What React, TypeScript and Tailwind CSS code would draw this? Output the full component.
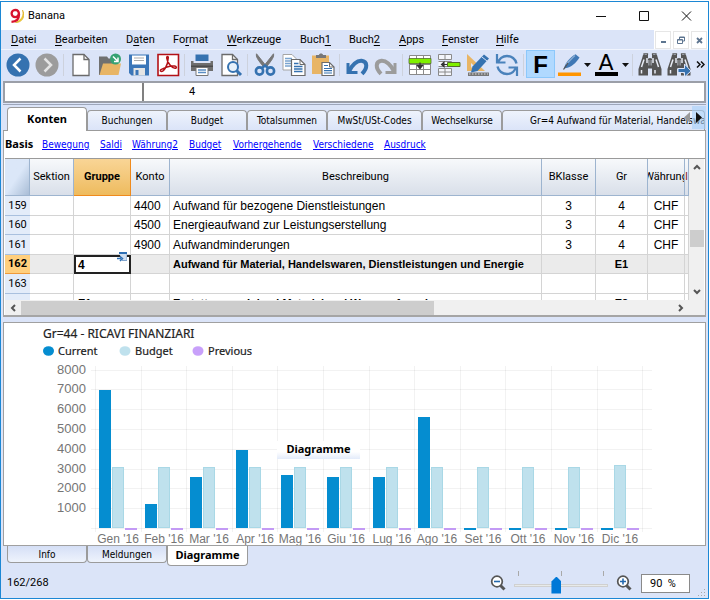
import React, { useState } from 'react';

const ui = "font-['Roboto','Open_Sans',sans-serif]";
const tabFont = "font-['DejaVu_Sans_Condensed','Noto_Sans',sans-serif]";
const strong = "font-['Noto_Sans','Open_Sans',sans-serif] font-bold";

const menus = [
  { pre: '', key: 'D', post: 'atei', width: 'w-[44px]' },
  { pre: '', key: 'B', post: 'earbeiten', width: 'w-[71px]' },
  { pre: 'D', key: 'a', post: 'ten', width: 'w-[47px]' },
  { pre: 'Fo', key: 'r', post: 'mat', width: 'w-[54px]' },
  { pre: '', key: 'W', post: 'erkzeuge', width: 'w-[73px]' },
  { pre: 'Buch', key: '1', post: '', width: 'w-[49px]' },
  { pre: 'Buch', key: '2', post: '', width: 'w-[50px]' },
  { pre: '', key: 'A', post: 'pps', width: 'w-[43px]' },
  { pre: '', key: 'F', post: 'enster', width: 'w-[54px]' },
  { pre: '', key: 'H', post: 'ilfe', width: 'w-[40px]' },
];

const tabs = [
  { label: 'Konten', width: 'w-[80px]' },
  { label: 'Buchungen', width: 'w-[80px]' },
  { label: 'Budget', width: 'w-[80px]' },
  { label: 'Totalsummen', width: 'w-[80px]' },
  { label: 'MwSt/USt-Codes', width: 'w-[95px]' },
  { label: 'Wechselkurse', width: 'w-[80px]' },
  { label: 'Gr=4 Aufwand für Material, Handelswa', width: 'flex-1' },
];

const views = [
  { label: 'Bewegung', width: 'w-[58px]' },
  { label: 'Saldi', width: 'w-[32px]' },
  { label: 'Währung2', width: 'w-[57px]' },
  { label: 'Budget', width: 'w-[44px]' },
  { label: 'Vorhergehende', width: 'w-[80px]' },
  { label: 'Verschiedene', width: 'w-[71px]' },
  { label: 'Ausdruck', width: 'w-[50px]' },
];

const rows = [
  { nr: '159', gruppe: '', konto: '4400', text: 'Aufwand für bezogene Dienstleistungen', bklasse: '3', gr: '4', curr: 'CHF' },
  { nr: '160', gruppe: '', konto: '4500', text: 'Energieaufwand zur Leistungserstellung', bklasse: '3', gr: '4', curr: 'CHF' },
  { nr: '161', gruppe: '', konto: '4900', text: 'Aufwandminderungen', bklasse: '3', gr: '4', curr: 'CHF' },
  { nr: '162', gruppe: '4', konto: '', text: 'Aufwand für Material, Handelswaren, Dienstleistungen und Energie', bklasse: '', gr: 'E1', curr: '', active: true, bold: true },
  { nr: '163', gruppe: '', konto: '', text: '', bklasse: '', gr: '', curr: '' },
  { nr: '', gruppe: 'E1', konto: '', text: 'Erstattungen, Inland Material und Warenaufwand', bklasse: '', gr: 'E2', curr: '', bold: true },
];

const months = [
  { name: "Gen '16", current: 6950, budget: 3080 },
  { name: "Feb '16", current: 1230, budget: 3080 },
  { name: "Mar '16", current: 2600, budget: 3080 },
  { name: "Apr '16", current: 3950, budget: 3080 },
  { name: "Mag '16", current: 2690, budget: 3080 },
  { name: "Giu '16", current: 2600, budget: 3080 },
  { name: "Lug '16", current: 2600, budget: 3080 },
  { name: "Ago '16", current: 5600, budget: 3080 },
  { name: "Set '16", current: 0, budget: 3080 },
  { name: "Ott '16", current: 0, budget: 3080 },
  { name: "Nov '16", current: 0, budget: 3080 },
  { name: "Dic '16", current: 0, budget: 3200 },
];

const Icon: React.FC<{ children: React.ReactNode }> = ({ children }) => (
  <svg viewBox="0 0 24 24" width="24" height="24" fill="none" aria-hidden="true">{children}</svg>
);

const Tool: React.FC<{ label: string; children: React.ReactNode; wide?: string }> = ({ label, children, wide = 'w-[29px]' }) => (
  <button type="button" aria-label={label} className={`${wide} h-[29px] shrink-0 flex items-center justify-center`}>
    {children}
  </button>
);

const Sep = () => (
  <div className="w-[5px] h-[29px] shrink-0 flex items-center justify-center">
    <div className="w-px h-[22px] bg-[#cdd2dd]" />
  </div>
);

const Drop = ({ label }: { label: string }) => (
  <Tool label={label} wide="w-[10px]">
    <svg width="7" height="4" viewBox="0 0 7 4"><path d="M0 0h7L3.500 4z" fill="#111" /></svg>
  </Tool>
);

const Binoculars = () => (
  <>
    <path d="M4 5.500 5 2h5v3.500h4V2h5l1 3.500L23.500 16v6.500H14v-7h-4v7H.5V16z" fill="#555" />
    <path d="M6 6.500 3.500 14M9 5v5M15 5v5M18 6.500l2.500 7.500M3.500 17v3.500M17 17v3.500" stroke="#e8ecf5" strokeWidth="1.500" />
    <path d="M6 2V.8h3.500V2M14.500 2V.8H18V2" stroke="#555" strokeWidth="1.200" />
    <path d="M10.500 7h3v5.500h-3z" fill="#c9cfdb" />
    <path d="M11.300 5h1.400v10h-1.400z" fill="#555" />
  </>
);

const Toolbar = () => (
  <div role="toolbar" className="flex items-start h-8 pl-[2px] bg-[#dbe4f8] border-t border-[#f0f4fd] overflow-hidden">
    <Tool label="Zurück">
      <Icon><circle cx="12" cy="12" r="11.500" fill="#3572b0" /><path d="M14.500 5.500 8 12l6.500 6.500" stroke="#fff" strokeWidth="2.500" /></Icon>
    </Tool>
    <Tool label="Vorwärts">
      <Icon><circle cx="12" cy="12" r="11.500" fill="#9c9c9c" /><path d="M9.500 5.500 16 12l-6.500 6.500" stroke="#e4e4e4" strokeWidth="2.500" /></Icon>
    </Tool>
    <Sep />
    <Tool label="Neu">
      <Icon><path d="M4 1.500h11l5 5v16H4z" fill="#fff" stroke="#6b6b6b" strokeWidth="1.300" /><path d="M15 1.500v5h5" stroke="#6b6b6b" strokeWidth="1.300" /></Icon>
    </Tool>
    <Tool label="Öffnen">
      <Icon>
        <path d="M1 3.500h8l1.500 2H17V22H1z" fill="#707070" />
        <path d="M5 10.500h18L20.500 22H1.500z" fill="#e8b565" />
        <circle cx="17.500" cy="6" r="5.500" fill="#36a273" />
        <path d="m15 3.500 4.500 4.500M20 4.500v4h-4" stroke="#fff" strokeWidth="1.500" />
      </Icon>
    </Tool>
    <Tool label="Speichern">
      <Icon>
        <path d="M2 1.500h20v21H4.500L2 20z" fill="#3b76b8" />
        <path d="M5 2.500h14v9H5z" fill="#fff" />
        <path d="M7 5h10M7 7.500h10" stroke="#aaa" />
        <path d="M6.500 15H18v7.500H6.500z" fill="#e5e5e5" />
        <path d="M8.500 17h3v5h-3z" fill="#3b76b8" />
      </Icon>
    </Tool>
    <Tool label="PDF">
      <Icon>
        <path d="M2 1.500h20.500v21H2z" fill="#fff" stroke="#b31217" strokeWidth="1.600" />
        <path d="M4.500 18c2.500 2.500 7.500-5 7.800-13.500 0-1.500-1.800-1.300-1.600.3.500 4.700 5 10.200 8.300 10.400 2.300 0 1.500-2-.5-2.200-4.500-.5-9.500 1.300-13.500 3.700-.6.400-.8.900-.5 1.300z" stroke="#b31217" strokeWidth="1.500" />
      </Icon>
    </Tool>
    <Sep />
    <Tool label="Drucken">
      <Icon>
        <path d="M5.500 1.500h13V8h-13z" fill="#3572b0" />
        <path d="M1 8h2.500v2h17V8H23v10H1z" fill="#6e6e6e" />
        <path d="M1 12.500h22V14H1z" fill="#4c4c4c" />
        <path d="M6 14.500h12v8H6z" fill="#fff" stroke="#777" />
        <path d="M8 17h8M8 19.500h8" stroke="#5b8ec4" strokeWidth="1.300" />
      </Icon>
    </Tool>
    <Tool label="Seitenansicht">
      <Icon>
        <path d="M3 1.500h10.500l5 5v16H3z" fill="#fff" stroke="#6b6b6b" strokeWidth="1.300" />
        <path d="M13.500 1.500v5h5" stroke="#6b6b6b" strokeWidth="1.300" />
        <circle cx="14" cy="14" r="5" fill="#e8f1fa" stroke="#3572b0" strokeWidth="2" />
        <path d="m17.500 17.500 4.500 4.500" stroke="#3572b0" strokeWidth="3" />
      </Icon>
    </Tool>
    <Sep />
    <Tool label="Ausschneiden">
      <Icon>
        <path d="M3.500.8c-.7 3 1 5.500 7 13l2.500-1zM20.500.8c.7 3-1 5.500-7 13l-2.500-1z" fill="#777" stroke="#777" />
        <circle cx="6.500" cy="18" r="3.600" stroke="#3572b0" strokeWidth="2.600" />
        <circle cx="17.500" cy="18" r="3.600" stroke="#3572b0" strokeWidth="2.600" />
        <path d="m9 15 3-2.500 3 2.500" stroke="#3572b0" strokeWidth="2.400" />
      </Icon>
    </Tool>
    <Tool label="Kopieren">
      <Icon>
        <path d="M1 1.500h9l4 4V17H1z" fill="#fff" stroke="#a5a5a5" />
        <path d="M3 5.500h7M3 8h9M3 10.500h9M3 13h9" stroke="#7aa4d0" strokeWidth="1.300" />
        <path d="M9.500 6.500H18l5 5v11H9.500z" fill="#fff" stroke="#6b6b6b" strokeWidth="1.200" />
        <path d="M18 6.500v5h5" stroke="#6b6b6b" />
        <path d="M12 10.500h4.500M12 13.500h8.500M12 16h8.500M12 18.500h8.500" stroke="#3572b0" strokeWidth="1.300" />
      </Icon>
    </Tool>
    <Tool label="Einfügen">
      <Icon>
        <path d="M1 2.500h17V21H1z" fill="#e8b565" />
        <path d="M5 2h3c0-2 4-2 4 0h3v3H5z" fill="#777" />
        <path d="M11 9.500h7.500l4.500 4.500v8.500H11z" fill="#fff" stroke="#6b6b6b" strokeWidth="1.200" />
        <path d="M18.500 9.500V14H23" stroke="#6b6b6b" />
        <path d="M13 12.500h4M13 15.500h8M13 17.700h8M13 20h8" stroke="#3572b0" strokeWidth="1.200" />
      </Icon>
    </Tool>
    <Sep />
    <Tool label="Rückgängig">
      <Icon>
        <path d="M3 10v9.500h9.500" stroke="#3572b0" strokeWidth="3" />
        <path d="M4 18.500C7 12 12 7.500 16.500 7.800c6 .7 6.500 7 .5 13" stroke="#3572b0" strokeWidth="4" />
      </Icon>
    </Tool>
    <Tool label="Wiederherstellen">
      <Icon>
        <path d="M21 10v9.500h-9.500" stroke="#9c9c9c" strokeWidth="3" />
        <path d="M20 18.500C17 12 12 7.500 7.500 7.800c-6 .7-6.500 7-.5 13" stroke="#9c9c9c" strokeWidth="4" />
      </Icon>
    </Tool>
    <Sep />
    <Tool label="Zeile einfügen">
      <Icon>
        <path d="M1.500 2.500h21v19h-21zM1.500 11.500h21M1.500 16.500h21M8.500 2.500v19M15.500 2.500v19" fill="#fff" stroke="#8a8a8a" />
        <path d="M1 5.500h22v5H1z" fill="#7ff000" stroke="#556b2f" strokeWidth=".8" />
        <path d="M12 9.500v5M9.500 12.500 12 15.500l2.500-3z" fill="#333" stroke="#333" strokeWidth="1.300" />
      </Icon>
    </Tool>
    <Tool label="Zeile löschen">
      <Icon>
        <path d="M1.500 1.500h13v5h-13zM8 1.500v5M1.500 8.500h13v5h-13M1.500 15.500h13v7h-13zM1.500 19h13M8 15.500v7" fill="#f4f6fb" stroke="#8a8a8a" />
        <path d="M10.500 9.500H23v4H10.500z" fill="#7ff000" stroke="#556b2f" />
        <path d="M10 11.500H4.500M7 9.300 4.500 11.500 7 13.700z" fill="#333" stroke="#333" strokeWidth="1.200" />
      </Icon>
    </Tool>
    <Tool label="Spalten einrichten">
      <Icon>
        <path d="M1 1v17h18z" fill="#e8b565" /><path d="M5 10v4.500h5z" fill="#dbe4f8" />
        <path d="M2 19.500h21V23H2z" fill="#777" /><path d="M3 21h19" stroke="#ddd" strokeDasharray="1.500 1.500" />
        <path d="m6.500 13.500 11.500-12 5 4-11.500 12.500-6.500 1.500z" fill="#3572b0" />
        <path d="m16 4 5 4" stroke="#dbe4f8" />
      </Icon>
    </Tool>
    <Tool label="Neu berechnen">
      <Icon>
        <path d="M3 10C4 6 7.500 3 12 3c4.500 0 8.500 3 9.500 7.500M21 14c-1 4-4.500 7-9 7-4.500 0-8.500-3-9.500-7.500" stroke="#4a82bb" strokeWidth="2.400" />
        <path d="M2 1v8.500h8.500M22 23v-8.500h-8.500" stroke="#4a82bb" strokeWidth="2.200" />
      </Icon>
    </Tool>
    <Sep />
    <button type="button" aria-pressed="true" className="w-[29px] h-[28px] shrink-0 bg-[#b0d9ff] border border-[#8cc8fb] font-['Liberation_Sans',sans-serif] font-bold text-[24px] leading-[28px] text-black">F</button>
    <Tool label="Hintergrundfarbe" wide="w-[27px]">
      <Icon>
        <path d="M1 19.500h23V23H1z" fill="#ff9500" />
        <path d="M7 15.500C8 10 13 4.500 18.500 1.200l4 3.300C19 10 14.500 13.800 10.500 14.800z" fill="#3f78b5" />
        <path d="M9 11.500c3-3 6-6.500 9-9" stroke="#85aad2" strokeWidth="1.500" />
        <path d="M6.500 16.500 11 10" stroke="#555" strokeWidth="1.300" />
      </Icon>
    </Tool>
    <Drop label="Hintergrundfarbe wählen" />
    <Tool label="Schriftfarbe" wide="w-[28px]">
      <span className="flex flex-col items-center font-['DejaVu_Sans',sans-serif] text-[22px] leading-[19px] text-black">A<span className="block w-[23px] h-1 bg-black" /></span>
    </Tool>
    <Drop label="Schriftfarbe wählen" />
    <Sep />
    <Tool label="Suchen"><Icon><Binoculars /></Icon></Tool>
    <Tool label="Weitersuchen">
      <Icon><Binoculars /><path d="M11 15.500h6.500V11l6.500 7-6.500 6v-4.500H11z" fill="#3572b0" stroke="#dbe4f8" /></Icon>
    </Tool>
    <Tool label="Mehr" wide="w-[14px]">
      <svg width="9" height="7" viewBox="0 0 9 7" fill="none"><path d="m1 .5 3 3-3 3M5 .5l3 3-3 3" stroke="#111" strokeWidth="1.500" /></svg>
    </Tool>
  </div>
);

const TitleBar = () => (
  <div className={`flex items-center h-7 bg-white pl-2 ${ui} text-[11px] text-black`}>
    <svg width="15" height="16" viewBox="0 0 15 16" fill="none">
      <path d="M13.500 2c1.500 5-.5 10-7 12.500 4 .5 9-3 8.400-9z" fill="#f3d33c" stroke="#d9a81e" strokeWidth=".6" />
      <path d="M9.800 5.500a3.600 3.600 0 1 1-3.700-3.600c2.500 0 3.900 1.500 3.900 4.800C10 11 7.500 13.500 2.500 13.800" stroke="#d8122d" strokeWidth="2.300" />
    </svg>
    <span className="ml-1">Banana</span>
    <div className="ml-auto flex">
      <button type="button" aria-label="Minimieren" className="w-[42px] flex justify-center"><svg width="11" height="11"><path d="M0 5.500h10" stroke="#111" /></svg></button>
      <button type="button" aria-label="Maximieren" className="w-[42px] flex justify-center"><svg width="11" height="11" fill="none"><path d="M1.500.500h9v9h-9z" stroke="#111" /></svg></button>
      <button type="button" aria-label="Schliessen" className="w-[44px] flex justify-center"><svg width="11" height="11"><path d="m1 .5 9 9M10 .5l-9 9" stroke="#111" /></svg></button>
    </div>
  </div>
);

const MenuBar = () => (
  <div className={`flex h-[19px] bg-[#dbe4f8] pl-[10px] ${ui} text-[11px] leading-[17px] text-black`}>
    {menus.map(m => (
      <button key={m.pre + m.key + m.post} type="button" className={`${m.width} shrink-0 text-left whitespace-nowrap`}>
        {m.pre}<span className="underline underline-offset-2">{m.key}</span>{m.post}
      </button>
    ))}
    <div className="ml-auto flex bg-white pt-px gap-[2px] px-px">
      <button type="button" aria-label="Fenster minimieren" className="w-4 border border-[#e6e6e6] flex justify-center items-center"><svg width="7" height="7"><path d="M1 5h5" stroke="#5d7590" strokeWidth="2" /></svg></button>
      <button type="button" aria-label="Fenster wiederherstellen" className="w-4 border border-[#e6e6e6] flex justify-center items-center"><svg width="8" height="8" fill="none"><path d="M2.500 3V1h5v4h-2M.5 3.500h5v4h-5zM.5 4h5M2.500 1.500h5" stroke="#5d7590" /></svg></button>
      <button type="button" aria-label="Fenster schliessen" className="w-4 border border-[#e6e6e6] flex justify-center items-center"><svg width="7" height="7"><path d="m1 1 5 5M6 1 1 6" stroke="#5d7590" strokeWidth="1.800" /></svg></button>
    </div>
  </div>
);

const th = 'h-[37px] p-0 font-normal border-r border-b border-[#9db4cf] bg-gradient-to-b from-[#f7f9fb] to-[#d9dfe9] overflow-hidden whitespace-nowrap';
const td = 'p-0 border-r border-b border-[#d4d4d4] whitespace-nowrap overflow-hidden';

const AccountTable: React.FC<{ value: string; onValue: (v: string) => void }> = ({ value, onValue }) => (
  <div className="flex border-t border-[#9a9a9a]">
    <div className="flex-1 min-w-0 h-[141px] overflow-hidden bg-white">
      <table className="w-full table-fixed border-separate border-spacing-0 font-['Liberation_Sans',sans-serif] text-[12px] leading-[14px] text-black">
        <colgroup>
          <col className="w-[25px]" /><col className="w-[44px]" /><col className="w-[57px]" /><col className="w-[39px]" />
          <col />
          <col className="w-[54px]" /><col className="w-[52px]" /><col className="w-[37px]" /><col className="w-[4px]" />
        </colgroup>
        <thead className={`${ui} text-[11px]`}>
          <tr>
            <th className="h-[37px] border-r border-b border-[#9db4cf] bg-gradient-to-br from-[#dbe7f8] from-50% to-[#a9bdd6]" aria-label="Zeile" />
            <th className={th}>Sektion</th>
            <th className="h-[37px] p-0 font-bold border-r border-b border-[#ef8a1d] bg-gradient-to-b from-[#f9d596] to-[#eebb5d]">Gruppe</th>
            <th className={th}>Konto</th>
            <th className={th}>Beschreibung</th>
            <th className={th}>BKlasse</th>
            <th className={th}>Gr</th>
            <th className={th}><span className="flex justify-center">Währung</span></th>
            <th className={`${th} text-[#8a2a2a]`}>I</th>
          </tr>
        </thead>
        <tbody>
          {rows.map((r, i) => (
            <tr key={i} className={`odd:h-5 even:h-[19px] ${r.active ? 'bg-[#ebebeb]' : ''} ${r.bold ? 'font-bold text-[11px]' : ''}`}>
              <td className={`p-0 border-b text-center text-[11px] ${ui} ${r.active ? 'bg-[#ffcf7d] border-[#ef9a3a]' : 'bg-[#e3ecf9] border-[#a9c0de]'}`}>{r.nr}</td>
              <td className={td} />
              <td className={r.active ? 'relative p-0 border-2 border-[#222] bg-white' : `${td} pl-1`}>
                {r.active ? (
                  <>
                    <input aria-label="Gruppe" value={value} onChange={e => onValue(e.target.value)} className="block w-full h-[15px] pl-[2px] font-bold text-[12px] outline-none" />
                    <svg className="absolute -top-[5px] right-[2px]" width="10" height="10" viewBox="0 0 10 10" fill="none">
                      <path d="M2 .5h8v8H5" fill="#cfdff2" stroke="#7fa3cd" /><path d="M2 1h8" stroke="#2f70b5" strokeWidth="2" /><path d="M0 6.500h4M3 4.500l2.500 2L3 9" stroke="#2f70b5" strokeWidth="1.500" />
                    </svg>
                  </>
                ) : r.gruppe}
              </td>
              <td className={`${td} pl-[3px]`}>{r.konto}</td>
              <td className={`${td} pl-[3px]`}>{r.text}</td>
              <td className={`${td} text-center`}>{r.bklasse}</td>
              <td className={`${td} text-center`}>{r.gr}</td>
              <td className={`${td} text-center`}>{r.curr}</td>
              <td className={td} />
            </tr>
          ))}
        </tbody>
      </table>
    </div>
    <div className="w-[15px] mr-px flex flex-col items-center bg-[#f0f0f0]">
      <button type="button" aria-label="Nach oben" className="h-4 flex items-center"><svg width="8" height="6" fill="none"><path d="m1 5 3-3 3 3" stroke="#555" strokeWidth="2" /></svg></button>
      <div className="flex-1" />
      <div className="w-[14px] h-[17px] bg-[#cdcdcd]" />
      <div className="h-[37px]" />
      <button type="button" aria-label="Nach unten" className="h-4 flex items-center"><svg width="8" height="6" fill="none"><path d="m1 1 3 3 3-3" stroke="#555" strokeWidth="2" /></svg></button>
    </div>
  </div>
);

const Chart = () => (
  <svg viewBox="0 0 701 222" className="block w-full font-['Liberation_Sans',sans-serif]" role="img" aria-label="RICAVI FINANZIARI">
    <g className="font-['Noto_Sans','Open_Sans',sans-serif]" fontSize="11" fill="#222" stroke="#222" strokeWidth=".2">
      <text x="39" y="15" fontSize="12">Gr=44 - RICAVI FINANZIARI</text>
      <text x="54" y="32">Current</text>
      <text x="131" y="32">Budget</text>
      <text x="204" y="32">Previous</text>
    </g>
    <ellipse cx="44.500" cy="28" rx="5.500" ry="4.800" fill="#058dd0" />
    <ellipse cx="121" cy="28" rx="5.500" ry="4.800" fill="#bfe1ed" />
    <ellipse cx="194" cy="28" rx="5.500" ry="4.800" fill="#c8a0fa" />
    <g stroke="#000" strokeOpacity=".05">
      {[0, 1, 2, 3, 4, 5, 6, 7, 8].map(n => <path key={n} d={`M87 ${Math.round(205 - n * 19.8) + 0.5}H648`} />)}
      {[0, 1, 2, 3, 4, 5, 6, 7, 8, 9, 10, 11, 12].map(n => <path key={n} d={`M${Math.round(91 + n * 45.6) + 0.5} 43V209`} />)}
    </g>
    <g fontSize="13" fill="#757575" textAnchor="end">
      {[1, 2, 3, 4, 5, 6, 7, 8].map(n => <text key={n} x="82" y={209 - Math.round(n * 19.8)}>{n * 1000}</text>)}
    </g>
    {months.map((m, i) => {
      const x = Math.round(95 + i * 45.6);
      const cur = Math.round(m.current * 0.0198);
      const bud = Math.round(m.budget * 0.0198);
      return (
        <g key={m.name}>
          {cur > 0
            ? <rect x={x} y={205 - cur} width="12" height={cur} fill="#058dd0" />
            : <rect x={x} y="205" width="12" height="2" fill="#058dd0" />}
          <rect x={x + 13.5} y={205.5 - bud} width="11" height={bud - 1} fill="#bfe1ed" stroke="#a9d8e6" />
          <rect x={x + 26} y="205" width="12" height="2" fill="#c39af5" />
          <text x={x + 19} y="220" fontSize="12" fill="#757575" textAnchor="middle">{m.name}</text>
        </g>
      );
    })}
  </svg>
);

const App: React.FC = () => {
  const [value, setValue] = useState('4');
  const [zoom, setZoom] = useState(90);
  const [formula, setFormula] = useState('4');

  return (
    <div className="bg-white pt-px pr-px">
      <div className="border border-[#1c87d4] bg-[#dbe4f8] overflow-hidden">
        <TitleBar />
        <MenuBar />
        <Toolbar />

        <div className={`flex mx-[2px] h-[22px] border-2 border-[#9b9fa8] bg-white ${ui} text-[11px]`}>
          <input aria-label="Feld" className="w-[137px] shrink-0 outline-none" />
          <div className="w-[2px] bg-[#808080]" />
          <input aria-label="Inhalt" value={formula} onChange={e => setFormula(e.target.value)} className="flex-1 min-w-0 pl-[45px] outline-none" />
        </div>

        <div className="mx-[2px] mt-px border-t border-[#9da6ba] relative">
          <div role="tablist" className={`flex items-end h-[26px] pl-1 pr-px border-b border-[#9b9b9b] bg-[#dbe4f8] ${tabFont} text-[10px] text-black`}>
            {tabs.map((t, i) => (
              <button
                key={t.label}
                type="button"
                role="tab"
                aria-selected={i === 0}
                className={`${t.width} min-w-0 overflow-hidden whitespace-nowrap rounded-t border border-b-0 border-[#9b9b9b] ${i === 0
                  ? `h-[24px] -mb-px bg-white text-[11px] ${strong}`
                  : i === 6
                    ? 'h-[20px] text-left pl-[27px] bg-gradient-to-b from-[#eef3fc] to-[#dbe4f8]'
                    : 'h-[20px] bg-gradient-to-b from-[#eef3fc] to-[#dbe4f8]'}`}
              >
                {t.label}
              </button>
            ))}
          </div>
          <div className="absolute right-0 top-px h-[23px] flex">
            <button type="button" aria-label="Tabs nach links" className="w-[8px] flex items-center"><svg width="6" height="11"><path d="M6 0v11L0 5.500z" fill="#999" /></svg></button>
            <button type="button" aria-label="Tabs nach rechts" className="w-[14px] flex items-center justify-center bg-[#a6d0fa]/60"><svg width="6" height="11"><path d="M0 0v11l6-5.500z" fill="#111" /></svg></button>
          </div>

          <div className="bg-white border-x border-b-2 border-[#a5a5a5]">
            <nav className={`flex items-center h-[27px] pl-px ${tabFont} text-[10px]`}>
              <span className={`w-[37px] text-[11px] text-black ${strong}`}>Basis</span>
              {views.map(v => (
                <a key={v.label} href="#" className={`${v.width} shrink-0 whitespace-nowrap text-[#0000ff] underline`}>{v.label}</a>
              ))}
            </nav>
            <div className="pl-px">
              <AccountTable value={value} onValue={setValue} />
              <div className="flex items-center h-[15px] bg-[#f0f0f0]">
                <button type="button" aria-label="Nach links" className="w-4 flex justify-center"><svg width="6" height="8" fill="none"><path d="M5 1 2 4l3 3" stroke="#555" strokeWidth="2" /></svg></button>
                <div className="w-[59%] h-[14px] bg-[#cdcdcd]" />
                <button type="button" aria-label="Nach rechts" className="ml-auto mr-[16px] w-4 flex justify-center"><svg width="6" height="8" fill="none"><path d="m1 1 3 3-3 3" stroke="#555" strokeWidth="2" /></svg></button>
              </div>
            </div>
          </div>
        </div>

        <div className="relative mx-[2px] mt-[5px] bg-white border border-[#a0a0a0]">
          <Chart />
          <div className="absolute left-[273px] top-[118px] w-[83px] h-[18px] bg-gradient-to-b from-white from-60% to-[#e3ebfa] text-center font-['Noto_Sans',sans-serif] font-bold text-[11px] leading-[16px] text-black">Diagramme</div>
        </div>

        <div role="tablist" className={`flex items-start pl-[6px] h-[22px] ${tabFont} text-[10px] text-black`}>
          <button type="button" role="tab" className="w-[80px] h-[17px] leading-[15px] rounded-b border border-t-0 border-[#9b9b9b] bg-gradient-to-b from-[#d5dff6] to-[#eef3fc]">Info</button>
          <button type="button" role="tab" className="w-[80px] h-[17px] leading-[15px] rounded-b border border-t-0 border-[#9b9b9b] bg-gradient-to-b from-[#d5dff6] to-[#eef3fc]">Meldungen</button>
          <button type="button" role="tab" aria-selected="true" className={`w-[81px] h-[21px] -mt-px rounded-b border border-t-0 border-[#9b9b9b] bg-white text-[11px] ${strong}`}>Diagramme</button>
        </div>

        <div className={`flex items-center h-[30px] pl-[6px] ${ui} text-[11px] text-black`}>
          <span>162/268</span>
          <button type="button" aria-label="Verkleinern" className="ml-auto">
            <svg width="16" height="16" viewBox="0 0 16 16" fill="none"><path d="m10.500 10.500 4 4" stroke="#555" strokeWidth="3" /><circle cx="7" cy="6.500" r="5.300" fill="#fff" stroke="#555" strokeWidth="1.700" /><path d="M4 6.500h6" stroke="#2468ad" strokeWidth="1.600" /></svg>
          </button>
          <div className="w-[94px] h-[24px] mx-2">
            <div className="flex justify-between px-1"><i className="w-px h-[5px] bg-[#a9a9a9]" /><i className="w-px h-[5px] bg-[#a9a9a9]" /><i className="w-px h-[5px] bg-[#a9a9a9]" /></div>
            <input
              type="range" min="10" max="190" value={zoom} aria-label="Zoom"
              onChange={e => setZoom(Number(e.target.value))}
              className="block w-full h-[18px] appearance-none bg-transparent [&::-webkit-slider-runnable-track]:h-[3px] [&::-webkit-slider-runnable-track]:bg-[#e7eaea] [&::-webkit-slider-runnable-track]:border [&::-webkit-slider-runnable-track]:border-[#d0d0d0] [&::-webkit-slider-thumb]:appearance-none [&::-webkit-slider-thumb]:w-[10px] [&::-webkit-slider-thumb]:h-[17px] [&::-webkit-slider-thumb]:-mt-2 [&::-webkit-slider-thumb]:bg-[#0078d7] [&::-webkit-slider-thumb]:[clip-path:polygon(50%_0,100%_30%,100%_100%,0_100%,0_30%)]"
            />
          </div>
          <button type="button" aria-label="Vergrössern">
            <svg width="16" height="16" viewBox="0 0 16 16" fill="none"><path d="m10.500 10.500 4 4" stroke="#555" strokeWidth="3" /><circle cx="7" cy="6.500" r="5.300" fill="#fff" stroke="#555" strokeWidth="1.700" /><path d="M4 6.500h6M7 3.500v6" stroke="#2468ad" strokeWidth="1.600" /></svg>
          </button>
          <input aria-label="Zoom in Prozent" value={`${zoom}  %`} readOnly className="w-[49px] h-[19px] ml-[9px] pl-2 bg-white border border-[#8a8a8a] outline-none whitespace-pre" />
          <svg className="self-end ml-2 mr-[2px] mb-px" width="8" height="8" fill="#aaa"><path d="M6 0h1v1H6zM3 3h1v1H3zM6 3h1v1H6zM0 6h1v1H0zM3 6h1v1H3zM6 6h1v1H6z" /></svg>
        </div>
      </div>
    </div>
  );
};

export default App;
